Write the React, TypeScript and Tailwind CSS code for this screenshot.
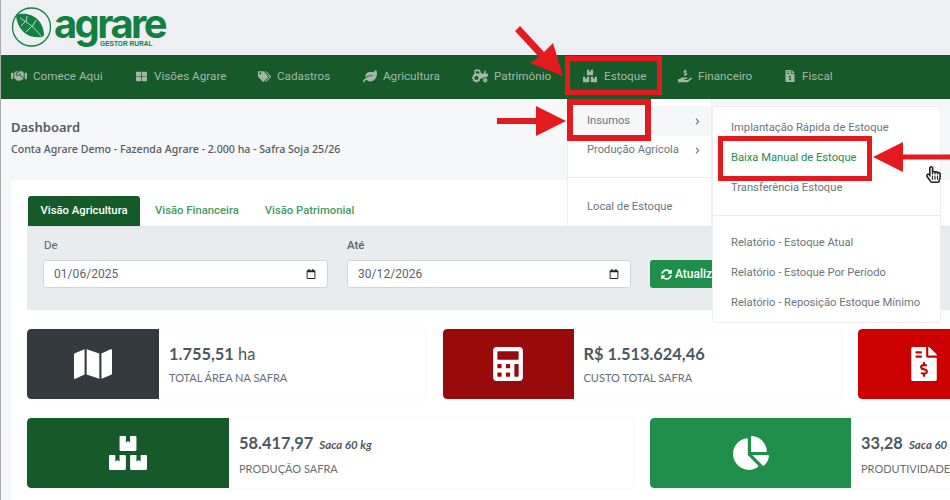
import React from "react";
import { FaHandshake, FaThLarge, FaTags, FaLeaf, FaTractor, FaBoxes, FaHandHoldingUsd, FaFileInvoiceDollar, FaSyncAlt, FaMap, FaCalculator, FaChartPie, FaRegCalendar, FaRegHandPointer, FaChevronRight } from "react-icons/fa";

const navItems = [
  { label: "Comece Aqui", icon: FaHandshake, w: "w-[125px]", s: 16, gap: "gap-[6px]" },
  { label: "Visões Agrare", icon: FaThLarge, w: "w-[122px]", s: 11, gap: "gap-[7px]" },
  { label: "Cadastros", icon: FaTags, w: "w-[105px]", s: 13, gap: "gap-[6px]" },
  { label: "Agricultura", icon: FaLeaf, w: "w-[109px]", s: 14, gap: "gap-[6px]" },
  { label: "Patrimônio", icon: FaTractor, w: "w-[111px]", s: 16, gap: "gap-[6px]" },
  { label: "Estoque", icon: FaBoxes, w: "w-[95px]", s: 14, gap: "gap-[7px]" },
  { label: "Financeiro", icon: FaHandHoldingUsd, w: "w-[106px]", s: 14, gap: "gap-[6px]" },
  { label: "Fiscal", icon: FaFileInvoiceDollar, w: "w-[60px]", s: 12, gap: "gap-[6px]" },
];

function DateField({ value, width }: { value: string; width: string }) {
  return (
    <div className={`${width} h-[28px] shrink-0 bg-white border border-[#ced4da] rounded-[3px] flex items-center justify-between pl-[10px] pr-[11px] text-[12px] tracking-[0.05px] text-[#5c636a]`}>
      <span>{value}</span>
      <FaRegCalendar size={10} className="text-[#222]" />
    </div>
  );
}

function Stat({ icon: Icon, color, iconW, size, value, unit, unitSmall, label }: any) {
  return (
    <div className="flex h-[70px] bg-white rounded-[4px] shadow-[0_0_4px_rgba(0,0,0,0.05)] overflow-hidden">
      <div className={`${iconW} ${color} shrink-0 flex items-center justify-center rounded-l-[4px] text-white`}>
        <Icon size={size} />
      </div>
      <div className="pl-[10px] pt-[14px] font-['Lato',sans-serif] whitespace-nowrap">
        <div className="text-[16.4px] leading-[22px] font-bold text-[#4d5761]">
          {value}
          {unit && <span className="font-normal"> {unit}</span>}
          {unitSmall && <i className="text-[11.5px] font-bold text-[#555] ml-[6px]">{unitSmall}</i>}
        </div>
        <div className="mt-[6px] text-[11px] leading-[14px] text-[#666e78]">{label}</div>
      </div>
    </div>
  );
}

function MenuItem({ children, green }: { children: React.ReactNode; green?: boolean }) {
  return <div className={`h-[30px] flex items-center pl-[18px] whitespace-nowrap ${green ? "text-[#1e8e4a]" : "text-[#6c757d]"}`}>{children}</div>;
}

export default function App() {
  return (
    <div className="relative w-[950px] h-[500px] overflow-hidden bg-[#f6f7f9] border-l border-[#a9aaad] font-['Roboto',sans-serif]">
      {/* logo bar */}
      <div className="h-[55px] bg-[#eeeff3] flex items-start pl-[10px] pt-[6px]">
        <svg width="42" height="42" viewBox="0 0 42 42" className="shrink-0">
          <circle cx="20.5" cy="21" r="19" fill="none" stroke="#12803f" strokeWidth="1.3" />
          <path d="M5 9 C15 5 32 10 33 28 C33 30 32 31 30 31 C15 33 6 22 5 9 Z" fill="#12803f" />
          <path d="M9 12 C16 16 24 22 30 30 M15 16 L16 10 M21 21 L25 14 M14 16 L10 20 M20 21 L15 26" stroke="#eeeff3" strokeWidth="0.8" fill="none" />
        </svg>
        <div className="relative ml-[1px] h-[45px] w-[120px]">
          <span className="block mt-[3px] text-[#12803f] font-['Inter',sans-serif] font-bold text-[40px] leading-[30px] tracking-[-2.6px]">agrare</span>
          <span className="absolute left-[46px] top-[34px] text-[#12803f] font-['Liberation_Sans',sans-serif] font-bold text-[6.6px] leading-[7px] whitespace-nowrap">GESTOR RURAL</span>
        </div>
      </div>

      {/* nav */}
      <nav className="h-[44px] pb-[1px] bg-[#165a29] flex items-center pl-[10px] text-[11.7px] text-[#a3b7a8]">
        {navItems.map(({ label, icon: Icon, w, s, gap }) => (
          <div key={label} className={`${w} ${gap} shrink-0 flex items-center whitespace-nowrap`}>
            <Icon size={s} />
            <span>{label}</span>
          </div>
        ))}
      </nav>

      {/* title */}
      <div className="pl-[10px] pt-[20px] h-[81px] font-['Noto_Sans',sans-serif]">
        <div className="text-[13px] leading-[16px] font-semibold text-[#545b62]">Dashboard</div>
        <div className="mt-[7px] text-[10.6px] leading-[14px] font-medium text-[#545b62]">Conta Agrare Demo - Fazenda Agrare - 2.000 ha - Safra Soja 25/26</div>
      </div>

      {/* card */}
      <div className="ml-[10px] w-[1300px] h-[320px] bg-white pl-[16px] pt-[16px]">
        <div className="flex items-stretch h-[31px] border-b border-[#dee2e6] text-[11.3px] font-medium text-[#3f9a63]">
          <div className="ml-[1px] w-[112px] bg-[#165a29] text-white rounded-t-[3px] flex items-center justify-center">Visão Agricultura</div>
          <div className="ml-[15px] flex items-center">Visão Financeira</div>
          <div className="ml-[26px] flex items-center">Visão Patrimonial</div>
        </div>
        <div className="h-[83px] bg-[#e9ecef] pl-[16px] pt-[11px] flex gap-[19px]">
          <div>
            <div className="ml-[1px] text-[11.5px] leading-[14px] text-[#5c636a] mb-[8px]">De</div>
            <DateField value="01/06/2025" width="w-[285px]" />
          </div>
          <div>
            <div className="text-[11.5px] leading-[14px] font-medium text-[#5c636a] mb-[8px]">Até</div>
            <DateField value="30/12/2026" width="w-[284px]" />
          </div>
          <div className="pt-[22px]">
            <div className="h-[28px] w-[90px] bg-[#1e8e4a] rounded-[3px] text-white text-[12px] font-medium flex items-center gap-[3px] pl-[11px]">
              <FaSyncAlt size={11} />
              <span>Atualizar</span>
            </div>
          </div>
        </div>

        <div className="grid grid-cols-[398px_398px_398px] gap-[17.5px] mt-[19px]">
          <Stat icon={FaMap} color="bg-[#343a40]" iconW="w-[132px]" size={38} value="1.755,51" unit="ha" label="TOTAL ÁREA NA SAFRA" />
          <Stat icon={FaCalculator} color="bg-[#990b0b]" iconW="w-[131px]" size={34} value="R$ 1.513.624,46" label="CUSTO TOTAL SAFRA" />
          <Stat icon={FaFileInvoiceDollar} color="bg-[#cc0000]" iconW="w-[132px]" size={34} />
        </div>
        <div className="grid grid-cols-[606px_606px] gap-[17px] mt-[19px]">
          <Stat icon={FaBoxes} color="bg-[#165a29]" iconW="w-[202px]" size={38} value="58.417,97" unitSmall="Saca 60 kg" label="PRODUÇÃO SAFRA" />
          <Stat icon={FaChartPie} color="bg-[#1e8e4a]" iconW="w-[201px]" size={36} value="33,28" unitSmall="Saca 60 kg" label="PRODUTIVIDADE SAFRA" />
        </div>
      </div>

      {/* first dropdown */}
      <div className="absolute left-[566px] top-[99px] w-[145px] bg-white border-x border-[#eeeff1] text-[11.2px]">
        <div className="h-[7px]" />
        <div className="h-[30px] bg-[#f6f7f9] flex items-center justify-between pl-[19px] pr-[10px] text-[#6c757d]">
          <span>Insumos</span>
          <FaChevronRight size={7} />
        </div>
        <div className="h-[29px] flex items-center justify-between pl-[19px] pr-[10px] text-[#6c757d]">
          <span>Produção Agrícola</span>
          <FaChevronRight size={7} />
        </div>
        <div className="h-[13px] border-b border-[#e9ecef]" />
        <div className="h-[48px] pl-[19px] pt-[22px] leading-[14px] text-[#6c757d]">Local de Estoque</div>
      </div>

      {/* second dropdown */}
      <div className="absolute left-[711px] top-[106px] w-[229px] h-[217px] bg-white border border-[#eceef0] rounded-[3px] pt-[6px] text-[11.2px]">
        <MenuItem>Implantação Rápida de Estoque</MenuItem>
        <MenuItem green>Baixa Manual de Estoque</MenuItem>
        <MenuItem>Transferência Estoque</MenuItem>
        <div className="h-[13px] border-b border-[#e9ecef]" />
        <div className="h-[12px]" />
        <MenuItem>Relatório - Estoque Atual</MenuItem>
        <MenuItem>Relatório - Estoque Por Período</MenuItem>
        <MenuItem>Relatório - Reposição Estoque Mínimo</MenuItem>
      </div>

      {/* annotations */}
      <div className="absolute left-[564px] top-[56px] w-[97px] h-[39px] border-[5px] border-[#e31b1f]" />
      <div className="absolute left-[566px] top-[99px] w-[84px] h-[42px] border-[6px] border-[#e31b1f]" />
      <div className="absolute left-[717px] top-[136px] w-[154px] h-[45px] border-[5px] border-[#e31b1f]" />
      <svg className="absolute left-[-1px] top-0" width="950" height="500" viewBox="0 0 950 500">
        <g fill="#e31b1f">
          <path d="M515 31 L520 26 L544 52 L553 43 L563 76 L530 63 L539 57 Z" />
          <path d="M497 118 H536 V106 L566 121 L536 136 V124 H497 Z" />
          <path d="M950 154.500 H903 V142 L873 157 L903 172 V159.500 H950 Z" />
        </g>
      </svg>
      <div className="absolute left-[924px] top-[166px] text-[#222]">
        <FaRegHandPointer size={17} />
      </div>
    </div>
  );
}
